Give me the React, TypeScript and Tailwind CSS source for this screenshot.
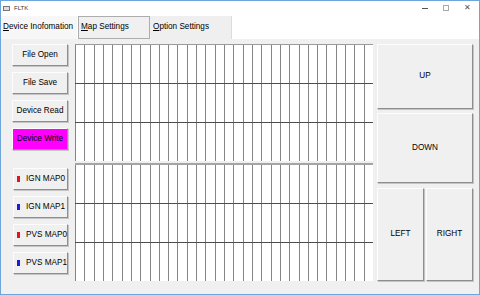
import React from "react";

const font = { fontFamily: '"Liberation Sans", Arial, sans-serif' };

const cols = Array.from({ length: 32 }, (_, i) => i);
const rows = [0, 1, 2];

function Btn({ label, className = "" }: { label: string; className?: string }) {
    return (
        <button
            className={`flex items-center justify-center whitespace-nowrap h-[22px] w-[56px] text-[8.2px] text-black border border-t-[#fdfdfd] border-l-[#fdfdfd] border-r-[#8e8e8e] border-b-[#8e8e8e] shadow-[1px_1px_0_#c4c4c4] ${className}`}
        >
            {label}
        </button>
    );
}

function MapBtn({ label, color }: { label: string; color: string }) {
    return (
        <button className="flex items-center whitespace-nowrap h-[22px] w-[55px] ml-[1px] text-[8.2px] text-black bg-[#f0f0f0] border border-t-[#fdfdfd] border-l-[#fdfdfd] border-r-[#8e8e8e] border-b-[#8e8e8e] shadow-[1px_1px_0_#c4c4c4]">
            <span className="shrink-0 ml-[3px] mr-[6px] w-[3px] h-[6px]" style={{ background: color }} />
            {label}
        </button>
    );
}

function Grid({ topClass }: { topClass: string }) {
    return (
        <div className={`flex flex-col w-[298px] bg-white ${topClass}`}>
            {rows.map((r) => (
                <div
                    key={r}
                    className={`grid grid-cols-[repeat(32,1fr)] h-[38px] ${r > 0 ? "border-t border-[#4d4d4d] h-[39px]" : ""}`}
                >
                    {cols.map((c) => (
                        <div key={c} className="border-l border-[#858585]" />
                    ))}
                </div>
            ))}
        </div>
    );
}

export default function App() {
    return (
        <div
            style={font}
            className="w-[480px] h-[295px] flex flex-col bg-[#f0f0f0] border border-[#6ea6d9] overflow-hidden"
        >
            {/* Title bar */}
            <div className="h-[14px] bg-white flex items-center text-[6px] text-[#333]">
                <span className="ml-[2px] w-[7px] h-[5px] border border-[#777] bg-[#ddd]" />
                <span className="ml-[4px]">FLTK</span>
                <div className="ml-auto flex items-center gap-[15px] mr-[8px] text-[#555]">
                    <span className="w-[6px] h-px bg-[#555]" />
                    <span className="w-[6px] h-[6px] border border-[#aaa]" />
                    <span className="text-[8px] leading-none">✕</span>
                </div>
            </div>

            {/* Tabs */}
            <div className="h-[24px] bg-white flex items-end text-[8.2px] text-black">
                <div className="h-[23px] w-[76px] flex items-center pl-[2px] bg-[#f7f7f7]">
                    <span><u>D</u>evice Inofomation</span>
                </div>
                <div className="h-[23px] w-[72px] ml-[1px] flex items-center pl-[2px] bg-[#f0f0f0] border border-[#adadad]">
                    <span><u>M</u>ap Settings</span>
                </div>
                <div className="h-[23px] w-[82px] flex items-center pl-[3px] bg-[#efefef] border-r border-[#dcdcdc]">
                    <span><u>O</u>ption Settings</span>
                </div>
            </div>

            {/* Body */}
            <div className="flex items-start pt-[5px] pl-[11px]">
                <div className="flex flex-col">
                    <div className="flex flex-col gap-[6px]">
                        <Btn label="File Open" className="bg-[#f0f0f0]" />
                        <Btn label="File Save" className="bg-[#f0f0f0]" />
                        <Btn label="Device Read" className="bg-[#f0f0f0]" />
                        <Btn label="Device Write" className="bg-[#ff00ff]" />
                    </div>
                    <div className="flex flex-col gap-[6px] mt-[18px]">
                        <MapBtn label="IGN MAP0" color="#e3141b" />
                        <MapBtn label="IGN MAP1" color="#1b1be0" />
                        <MapBtn label="PVS MAP0" color="#e3141b" />
                        <MapBtn label="PVS MAP1" color="#1b1be0" />
                    </div>
                </div>

                <div className="flex flex-col ml-[7px] gap-[2px]">
                    <Grid topClass="border-t border-[#9a9a9a]" />
                    <Grid topClass="border-t-2 border-[#a4a4a4]" />
                </div>

                <div className="flex flex-col ml-[4px] w-[96px] text-[8.2px] text-black">
                    <button className="h-[65px] bg-[#f0f0f0] border border-t-[#fdfdfd] border-l-[#fdfdfd] border-r-[#8e8e8e] border-b-[#8e8e8e] shadow-[1px_1px_0_#c4c4c4]">
                        UP
                    </button>
                    <button className="h-[70px] mt-[4px] bg-[#f0f0f0] border border-t-[#fdfdfd] border-l-[#fdfdfd] border-r-[#8e8e8e] border-b-[#8e8e8e] shadow-[1px_1px_0_#c4c4c4]">
                        DOWN
                    </button>
                    <div className="flex gap-[2px] mt-[5px]">
                        <button className="h-[93px] w-[47px] bg-[#f0f0f0] border border-t-[#fdfdfd] border-l-[#fdfdfd] border-r-[#8e8e8e] border-b-[#8e8e8e] shadow-[1px_1px_0_#c4c4c4]">
                            LEFT
                        </button>
                        <button className="h-[93px] w-[47px] bg-[#f0f0f0] border border-t-[#fdfdfd] border-l-[#fdfdfd] border-r-[#8e8e8e] border-b-[#8e8e8e] shadow-[1px_1px_0_#c4c4c4]">
                            RIGHT
                        </button>
                    </div>
                </div>
            </div>
        </div>
    );
}
